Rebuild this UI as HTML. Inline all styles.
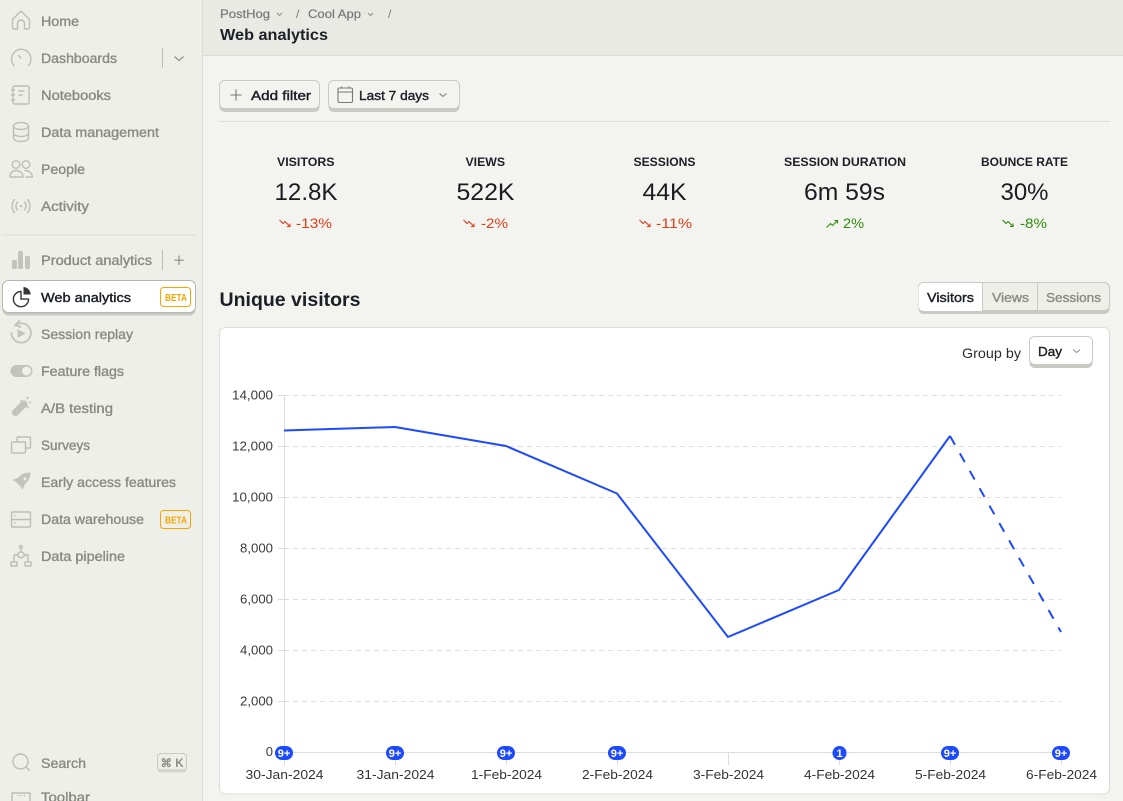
<!DOCTYPE html>
<html><head><meta charset="utf-8"><title>Web analytics</title>
<style>
html,body{margin:0;padding:0;width:1123px;height:801px;overflow:hidden;background:#f3f4ef}
svg{display:block;font-family:"Liberation Sans",sans-serif}
.n{font-size:13.5px;fill:#8a8a85;stroke:#8a8a85;stroke-width:.35}
.ic{fill:none;stroke:#bdbeb8;stroke-width:1.4;stroke-linecap:round;stroke-linejoin:round}
.f{fill:#c2c3bd;stroke:none}
.h{font-size:12px;font-weight:700;fill:#1d1f27}
.v{font-size:24px;fill:#1b1c20;text-anchor:middle}
.d{font-size:14px}
.y{font-size:13px;fill:#3a3b3f;text-anchor:end}
.x{font-size:13px;fill:#333437;text-anchor:middle}
.g{stroke:#dededb;stroke-width:1;stroke-dasharray:5 4}
.b{font-size:11px;font-weight:700;fill:#fff;text-anchor:middle}
.t{stroke:#dcdcd9;stroke-width:1}
.m{fill:#1d1f27;stroke:#1d1f27;stroke-width:.4;font-size:13px}
.m2{fill:#8a8a85;stroke:#8a8a85;stroke-width:.35;font-size:13px}
</style></head><body>
<svg width="1123" height="801" viewBox="0 0 1123 801" xmlns="http://www.w3.org/2000/svg">
<rect width="1123" height="801" fill="#f3f4ef"/>
<!-- sidebar -->
<rect width="202.500" height="801" fill="#eeefe9"/>
<rect x="202" width="1" height="801" fill="#dcddd7"/>
<text class="n" lengthAdjust="spacingAndGlyphs" x="41" y="26" textLength="38">Home</text>
<text class="n" lengthAdjust="spacingAndGlyphs" x="41" y="63" textLength="76">Dashboards</text>
<text class="n" lengthAdjust="spacingAndGlyphs" x="41" y="100" textLength="70">Notebooks</text>
<text class="n" lengthAdjust="spacingAndGlyphs" x="41" y="137" textLength="118">Data management</text>
<text class="n" lengthAdjust="spacingAndGlyphs" x="41" y="174" textLength="44">People</text>
<text class="n" lengthAdjust="spacingAndGlyphs" x="41" y="211" textLength="48">Activity</text>
<text class="n" lengthAdjust="spacingAndGlyphs" x="41" y="265" textLength="111">Product analytics</text>
<text class="n" lengthAdjust="spacingAndGlyphs" x="41" y="339" textLength="92">Session replay</text>
<text class="n" lengthAdjust="spacingAndGlyphs" x="41" y="376" textLength="83">Feature flags</text>
<text class="n" lengthAdjust="spacingAndGlyphs" x="41" y="413" textLength="72">A/B testing</text>
<text class="n" lengthAdjust="spacingAndGlyphs" x="41" y="450" textLength="49">Surveys</text>
<text class="n" lengthAdjust="spacingAndGlyphs" x="41" y="487" textLength="135">Early access features</text>
<text class="n" lengthAdjust="spacingAndGlyphs" x="41" y="524" textLength="103">Data warehouse</text>
<text class="n" lengthAdjust="spacingAndGlyphs" x="41" y="561" textLength="84">Data pipeline</text>
<text class="n" lengthAdjust="spacingAndGlyphs" x="41" y="768" textLength="45">Search</text>
<text class="n" lengthAdjust="spacingAndGlyphs" x="41" y="802" textLength="49">Toolbar</text>
<!-- icons -->
<path class="ic" d="M12.500 19.500L21 11l8.500 8.500v8a1.500 1.500 0 0 1-1.500 1.500h-3.500v-5.500a3.500 3.500 0 0 0-7 0V29H14a1.500 1.500 0 0 1-1.500-1.500z"/>
<path class="ic" d="M14 65.500a9.700 9.700 0 1 1 14.500 0M18.500 55.500l2.500 2.500"/>
<rect class="ic" x="13" y="86" width="16" height="18" rx="1.500"/>
<path class="ic" d="M11.500 90h3M11.500 95h3M11.500 100h3M19 91h5M19 95h3"/>
<ellipse class="ic" cx="21" cy="126" rx="7.500" ry="3.500"/>
<path class="ic" d="M13.500 126v12c0 2 3.400 3.500 7.500 3.500s7.500-1.500 7.500-3.500v-12M13.500 133c0 2 3.400 3.500 7.500 3.500s7.500-1.500 7.500-3.500"/>
<circle class="ic" cx="16" cy="164.500" r="3.800"/><circle class="ic" cx="26" cy="164.500" r="3.800"/>
<path class="ic" d="M10 177c0-4.500 3-6.500 6-6.500s7 2 7 6.500zM25 170.500c4 0 7 2.500 7.500 6.500H26"/>
<circle class="f" cx="21" cy="206" r="1.300"/>
<path class="ic" d="M17.500 202a6 6 0 0 0 0 8M24.500 202a6 6 0 0 1 0 8M14.500 199.500a10 10 0 0 0 0 13M27.500 199.500a10 10 0 0 1 0 13"/>
<rect x="2" y="234.500" width="194" height="1" fill="#dcddd7"/>
<rect class="f" x="12" y="260" width="5" height="9" rx="1.500"/><rect class="f" x="18" y="251" width="5" height="18" rx="1.500"/><rect class="f" x="25" y="256" width="5" height="13" rx="1.500"/>
<rect x="162" y="48" width="1" height="20" fill="#bdbeb8"/>
<path d="M174.500 56.500l4.500 4 4.500-4" fill="none" stroke="#8f8f8a" stroke-width="1.200"/>
<rect x="162" y="250" width="1" height="20" fill="#bdbeb8"/>
<path d="M179 255.500v9.500M174.200 260.200h9.600" stroke="#8f8f8a" stroke-width="1.200"/>
<!-- active -->
<rect x="2.500" y="281.500" width="193" height="34" rx="6" fill="#c9cac4"/>
<rect x="2.500" y="280.500" width="193" height="32" rx="6" fill="#fff" stroke="#b5b6b0"/>
<path d="M21 291.500a7.600 7.600 0 1 0 7.600 7.600H21z" fill="none" stroke="#35363a" stroke-width="1.400"/>
<path d="M23.500 287c4 .2 7 3.400 7.200 7.500h-7.200z" fill="#35363a"/>
<text class="m" lengthAdjust="spacingAndGlyphs" x="41" y="302" font-size="13.500" textLength="90">Web analytics</text>
<rect x="160.500" y="287.500" width="30" height="19" rx="3" fill="#fff" stroke="#f7a501"/>
<text x="165" y="301" font-size="10" font-weight="700" fill="#f7a501" lengthAdjust="spacingAndGlyphs" textLength="22">BETA</text>
<!-- other icons -->
<path d="M15 325.500a9.700 9.700 0 1 1-3.500 7.500M15.500 325l4-4.500M15.500 325l5 2" fill="none" stroke="#c2c3bd" stroke-width="1.800" stroke-linecap="round"/>
<path class="f" d="M17.500 329l8 4.500-8 4.500z"/>
<rect class="f" x="10.500" y="365" width="22" height="12" rx="6"/>
<circle cx="26.500" cy="371" r="4.500" fill="#eeefe9"/>
<path d="M24 404L15.500 412.500" stroke="#c2c3bd" stroke-width="7" stroke-linecap="round"/>
<path d="M21 400.500l7 7" stroke="#c2c3bd" stroke-width="1.600" stroke-linecap="round"/>
<circle class="f" cx="27.500" cy="398" r="1.200"/><circle class="f" cx="30" cy="402.500" r="1"/>
<rect class="ic" x="17" y="437" width="13.500" height="11" rx="1"/>
<rect x="11.500" y="442" width="14" height="11" rx="1" fill="#eeefe9" stroke="#bdbeb8" stroke-width="1.400"/>
<path class="f" d="M30.500 472.500c-5 0-9 1-12 5l-6 2.500 3.500 2 4.500 4.500 2 3.500 2.500-6c3.500-3 5.500-7 5.500-11.500z"/>
<circle cx="25" cy="479" r="1.500" fill="#eeefe9"/>
<rect class="ic" x="11.500" y="512" width="19" height="15" rx="1"/>
<path class="ic" d="M11.500 519.500h19M14.500 515.700h.4M14.500 523h.4"/>
<circle class="ic" cx="21" cy="547" r="1.500"/><path class="ic" d="M21 549v3M18 553.500l3-2 3 2v3l-3 1.500-3-1.500zM18 555h-4v6M24 555h4v6"/>
<rect class="ic" x="11" y="562" width="6" height="4"/><rect class="ic" x="25" y="562" width="6" height="4"/>
<circle class="ic" cx="20.500" cy="761.500" r="7.500"/><path class="ic" d="M26 767l3.500 3.500"/>
<rect x="157.500" y="754.500" width="29" height="18" rx="3" fill="#d6d7d1"/>
<rect x="157.500" y="753.500" width="29" height="16.500" rx="3" fill="#eeefe9" stroke="#c8c9c3"/>
<text x="172" y="767" font-size="11.500" font-weight="700" fill="#8f8f8a" text-anchor="middle">⌘ K</text>
<rect class="ic" x="12" y="793" width="18" height="14"/><path class="ic" d="M18 795.500h.3M21 795.500h.3M24 795.500h.3"/>
<rect x="160.500" y="510.500" width="30" height="18" rx="3" fill="#eeefe9" stroke="#f7a501"/>
<text x="165" y="523.500" font-size="10" font-weight="700" fill="#f7a501" lengthAdjust="spacingAndGlyphs" textLength="22">BETA</text>
<!-- header -->
<rect x="203" width="920" height="55" fill="#e9eae4"/>
<rect x="203" y="55" width="920" height="1" fill="#dcddd7"/>
<text x="220" y="18" font-size="12" fill="#77787a" stroke="#77787a" stroke-width=".2" lengthAdjust="spacingAndGlyphs" textLength="50">PostHog</text>
<path d="M277 13l2.500 2.500 2.500-2.500" fill="none" stroke="#8f8f8a"/>
<text x="296" y="18" font-size="12" fill="#77787a">/</text>
<text x="308" y="18" font-size="12" fill="#77787a" stroke="#77787a" stroke-width=".2" lengthAdjust="spacingAndGlyphs" textLength="53">Cool App</text>
<path d="M368 13l2.500 2.500 2.500-2.500" fill="none" stroke="#8f8f8a"/>
<text x="388" y="18" font-size="12" fill="#77787a">/</text>
<text x="220" y="40" font-size="15.500" font-weight="700" fill="#1d1f27" lengthAdjust="spacingAndGlyphs" textLength="108">Web analytics</text>
<!-- filter buttons -->
<rect x="219.500" y="84" width="100" height="28" rx="5" fill="#c9cac4"/>
<rect x="219.500" y="80.500" width="100" height="28" rx="5" fill="#f3f4ef" stroke="#c9cac4"/>
<path d="M236 89.500v11M230.500 95h11" stroke="#77787a" stroke-width="1.100"/>
<text class="m" lengthAdjust="spacingAndGlyphs" x="251" y="100" textLength="60">Add filter</text>
<rect x="328.500" y="84" width="131" height="28" rx="5" fill="#c9cac4"/>
<rect x="328.500" y="80.500" width="131" height="28" rx="5" fill="#f3f4ef" stroke="#c9cac4"/>
<rect x="338" y="88" width="14.500" height="14.500" rx="1.500" fill="none" stroke="#77787a" stroke-width="1.100"/>
<path d="M338 92h14.500M341.500 86.500v2M349 86.500v2" stroke="#77787a" stroke-width="1.100"/>
<text class="m" lengthAdjust="spacingAndGlyphs" x="359" y="100" textLength="70">Last 7 days</text>
<path d="M439.500 93.500l3.500 3 3.500-3" fill="none" stroke="#77787a"/>
<rect x="219" y="121" width="891" height="1" fill="#dcddd7"/>
<!-- stats -->
<text class="h" lengthAdjust="spacingAndGlyphs" x="277" y="166" textLength="57.500">VISITORS</text>
<text class="h" lengthAdjust="spacingAndGlyphs" x="465.500" y="166" textLength="39.500">VIEWS</text>
<text class="h" lengthAdjust="spacingAndGlyphs" x="633.500" y="166" textLength="62">SESSIONS</text>
<text class="h" lengthAdjust="spacingAndGlyphs" x="784" y="166" textLength="122">SESSION DURATION</text>
<text class="h" lengthAdjust="spacingAndGlyphs" x="981" y="166" textLength="87">BOUNCE RATE</text>
<text class="v" lengthAdjust="spacingAndGlyphs" x="306" y="200" textLength="63">12.8K</text>
<text class="v" lengthAdjust="spacingAndGlyphs" x="485.500" y="200" textLength="58">522K</text>
<text class="v" lengthAdjust="spacingAndGlyphs" x="664.500" y="200" textLength="44">44K</text>
<text class="v" lengthAdjust="spacingAndGlyphs" x="844.500" y="200" textLength="81">6m 59s</text>
<text class="v" lengthAdjust="spacingAndGlyphs" x="1024.500" y="200" textLength="48">30%</text>
<g fill="none" stroke="#e03d18" stroke-width="1.100">
<path d="M279.500 220l3.500 3.500 2-2 4.500 4.500M290 223.500v3h-3"/>
<path d="M463.500 220l3.500 3.500 2-2 4.500 4.500M474 223.500v3h-3"/>
<path d="M639.500 220l3.500 3.500 2-2 4.500 4.500M650 223.500v3h-3"/>
</g>
<g fill="none" stroke="#2f8a0c" stroke-width="1.100">
<path d="M826.500 227.500l4-4 2 2 5-5M834.500 220.500h3v3"/>
<path d="M1002.500 220l3.500 3.500 2-2 4.500 4.500M1013 223.500v3h-3"/>
</g>
<text class="d" lengthAdjust="spacingAndGlyphs" x="296" y="228" fill="#e03d18" textLength="36">-13%</text>
<text class="d" lengthAdjust="spacingAndGlyphs" x="481" y="228" fill="#e03d18" textLength="27">-2%</text>
<text class="d" lengthAdjust="spacingAndGlyphs" x="656" y="228" fill="#e03d18" textLength="36">-11%</text>
<text class="d" lengthAdjust="spacingAndGlyphs" x="843" y="228" fill="#2f8a0c" textLength="21">2%</text>
<text class="d" lengthAdjust="spacingAndGlyphs" x="1020" y="228" fill="#2f8a0c" textLength="27">-8%</text>
<!-- section -->
<text x="219.500" y="306" font-size="19.500" font-weight="700" fill="#1d1f27" lengthAdjust="spacingAndGlyphs" textLength="141">Unique visitors</text>
<rect x="918.500" y="286" width="191" height="28" rx="5" fill="#c9cac4"/>
<rect x="918.500" y="282.500" width="191" height="28" rx="5" fill="#eeefe9" stroke="#c9cac4"/>
<path d="M983 283H923.500a5 5 0 0 0-5 5v18a5 5 0 0 0 5 5H982.500z" fill="#fff"/>
<rect x="982" y="283" width="1" height="30" fill="#c9cac4"/><rect x="1037" y="283" width="1" height="30" fill="#c9cac4"/>
<text class="m" lengthAdjust="spacingAndGlyphs" x="927" y="302" textLength="47">Visitors</text>
<text class="m2" lengthAdjust="spacingAndGlyphs" x="992" y="302" textLength="37">Views</text>
<text class="m2" lengthAdjust="spacingAndGlyphs" x="1046" y="302" textLength="55">Sessions</text>
<!-- card -->
<rect x="219.500" y="327.500" width="890" height="466.500" rx="6" fill="#fff" stroke="#dcddd7"/>
<text x="962" y="358" font-size="14" fill="#2a2b2e" lengthAdjust="spacingAndGlyphs" textLength="59">Group by</text>
<rect x="1029.500" y="340" width="63" height="28" rx="5" fill="#c9cac4"/>
<rect x="1029.500" y="336.500" width="63" height="28" rx="5" fill="#fff" stroke="#c9cac4"/>
<text class="m" lengthAdjust="spacingAndGlyphs" x="1038" y="356" textLength="24">Day</text>
<path d="M1073 349.500l3.500 3 3.500-3" fill="none" stroke="#8f8f8a"/>
<!-- chart -->
<g class="g"><path d="M284 395.500H1061M284 446.500H1061M284 497.500H1061M284 548.500H1061M284 599.500H1061M284 650.500H1061M284 701.500H1061"/></g>
<path class="t" d="M284.500 395V765M278 395.500h6M278 446.500h6M278 497.500h6M278 548.500h6M278 599.500h6M278 650.500h6M278 701.500h6M284 752.500H1061M395.500 752v13M506.500 752v13M617.500 752v13M728.500 752v13M839.500 752v13M950.500 752v13M1061.500 752v13"/>
<g class="y">
<text lengthAdjust="spacingAndGlyphs" textLength="41" x="273" y="399.500">14,000</text><text lengthAdjust="spacingAndGlyphs" textLength="41" x="273" y="450.500">12,000</text><text lengthAdjust="spacingAndGlyphs" textLength="41" x="273" y="501.500">10,000</text><text lengthAdjust="spacingAndGlyphs" textLength="33" x="273" y="552.500">8,000</text><text lengthAdjust="spacingAndGlyphs" textLength="33" x="273" y="603.500">6,000</text><text lengthAdjust="spacingAndGlyphs" textLength="33" x="273" y="654.500">4,000</text><text lengthAdjust="spacingAndGlyphs" textLength="33" x="273" y="705.500">2,000</text><text x="273" y="756">0</text>
</g>
<polyline points="284,430.500 395,427 506,446 617,493.500 728,637 839,590 950,436" fill="none" stroke="#1d4aff" stroke-width="2" stroke-linejoin="round"/>
<line x1="950" y1="436" x2="1061" y2="632" stroke="#1d4aff" stroke-width="2" stroke-dasharray="10 10"/>
<g fill="#1d4aff">
<rect x="275" y="746" width="18" height="14" rx="7"/><rect x="386" y="746" width="18" height="14" rx="7"/><rect x="497" y="746" width="18" height="14" rx="7"/><rect x="608" y="746" width="18" height="14" rx="7"/><circle cx="839.500" cy="753" r="7"/><rect x="941" y="746" width="18" height="14" rx="7"/><rect x="1052" y="746" width="18" height="14" rx="7"/>
</g>
<g class="b">
<text x="284" y="757">9+</text><text x="395" y="757">9+</text><text x="506" y="757">9+</text><text x="617" y="757">9+</text><text x="839.500" y="757">1</text><text x="950" y="757">9+</text><text x="1061" y="757">9+</text>
</g>
<g class="x">
<text lengthAdjust="spacingAndGlyphs" x="284.500" y="779" textLength="78">30-Jan-2024</text><text lengthAdjust="spacingAndGlyphs" x="395.500" y="779" textLength="78">31-Jan-2024</text><text lengthAdjust="spacingAndGlyphs" x="506.500" y="779" textLength="71">1-Feb-2024</text><text lengthAdjust="spacingAndGlyphs" x="617.500" y="779" textLength="71">2-Feb-2024</text><text lengthAdjust="spacingAndGlyphs" x="728.500" y="779" textLength="71">3-Feb-2024</text><text lengthAdjust="spacingAndGlyphs" x="839.500" y="779" textLength="71">4-Feb-2024</text><text lengthAdjust="spacingAndGlyphs" x="950.500" y="779" textLength="71">5-Feb-2024</text><text lengthAdjust="spacingAndGlyphs" x="1061.500" y="779" textLength="71">6-Feb-2024</text>
</g>
</svg>
</body></html>
